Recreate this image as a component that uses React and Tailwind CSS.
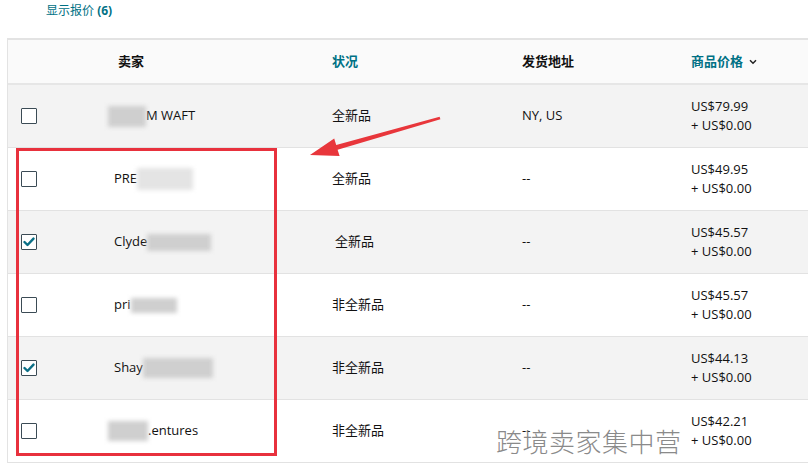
import React from 'react';

const rows = [
    { checked: false, gray: true, pre: '', blur: { w: 38, tone: 'dark', h: 21 }, post: 'M WAFT', cond: '全新品', ship: 'NY, US', price: 'US$79.99' },
    { checked: false, gray: false, pre: 'PRE', blur: { w: 56, tone: 'light', h: 22 }, post: '', cond: '全新品', ship: '--', price: 'US$49.95' },
    { checked: true, gray: true, pre: 'Clyde', blur: { w: 64, tone: 'dark', h: 17 }, post: '', cond: '全新品', ship: '--', price: 'US$45.57', condShift: true },
    { checked: false, gray: false, pre: 'pri', blur: { w: 46, tone: 'dark', h: 15 }, post: '', cond: '非全新品', ship: '--', price: 'US$45.57' },
    { checked: true, gray: true, pre: 'Shay', blur: { w: 70, tone: 'dark', h: 20 }, post: '', cond: '非全新品', ship: '--', price: 'US$44.13' },
    { checked: false, gray: false, pre: '', blur: { w: 40, tone: 'dark', h: 20 }, post: '.entures', cond: '非全新品', ship: '--', price: 'US$42.21' },
];

const Checkbox = ({ checked }) => (
    <div className="w-[16px] h-[16px] border border-[#3b4b55] bg-white rounded-[1px] flex items-center justify-center">
        {checked && (
            <svg width="12" height="10" viewBox="0 0 12 10">
                <path d="M1.5 5 L4.5 8 L10.5 1.6" fill="none" stroke="#0a6f86" strokeWidth="2.4" strokeLinecap="round" strokeLinejoin="round" />
            </svg>
        )}
    </div>
);

const Blur = ({ w, h, tone }) => (
    <span
        className={`inline-block align-middle blur-[2px] ${tone === 'dark' ? 'bg-[#cfcfcf]' : 'bg-[#e4e4e4]'}`}
        style={{ width: w, height: h }}
    ></span>
);

const App = () => {
    return (
        <div className="relative w-[812px] h-[467px] bg-white overflow-hidden text-[#111] text-[13px]" style={{ fontFamily: '"Open Sans", "Noto Sans CJK SC", sans-serif' }}>
            <div className="pl-[46px] pt-[3px] text-[12px] leading-[16px] text-[#007185]">
                显示报价 <span className="font-bold">(6)</span>
            </div>

            <div className="mt-[19px] ml-[7px] mr-[4px] border-t-2 border-l border-[#e3e3e3]">
                <div className="grid grid-cols-[100px_218px_190px_169px_1fr] h-[45px] items-center bg-[#fafafa] border-b-2 border-[#e6e6e6] font-bold">
                    <div></div>
                    <div className="pl-[10px]">卖家</div>
                    <div className="pl-[6px] text-[#007185]">状况</div>
                    <div className="pl-[6px]">发货地址</div>
                    <div className="pl-[6px] flex items-center gap-[6px] text-[#007185]">
                        商品价格
                        <svg width="8" height="6" viewBox="0 0 8 6">
                            <path d="M1 1.3 L4 4.3 L7 1.3" fill="none" stroke="#222" strokeWidth="1.5" />
                        </svg>
                    </div>
                </div>

                {rows.map((r, i) => (
                    <div
                        key={i}
                        className={`grid grid-cols-[100px_218px_190px_169px_1fr] h-[63px] items-center border-b border-[#e2e2e2] ${r.gray ? 'bg-[#f3f3f3]' : 'bg-white'}`}
                    >
                        <div className="pl-[13px]">
                            <Checkbox checked={r.checked} />
                        </div>
                        <div className={`${r.pre ? 'pl-[6px]' : 'pl-0'} flex items-center`}>
                            {r.pre}
                            <Blur {...r.blur} />
                            {r.post}
                        </div>
                        <div className={r.condShift ? 'pl-[9px]' : 'pl-[6px]'}>{r.cond}</div>
                        <div className="pl-[6px]">{r.ship}</div>
                        <div className="pl-[6px] leading-[19px]">
                            <div>{r.price}</div>
                            <div>+ US$0.00</div>
                        </div>
                    </div>
                ))}
            </div>

            <div className="absolute left-[16px] top-[148px] w-[261px] h-[308px] border-[3px] border-[#e8313d] pointer-events-none"></div>

            <svg className="absolute inset-0 pointer-events-none" width="812" height="467">
                <polygon
                    points="439.6,116.8 336.2,144.9 334.2,138.6 310,155 339.6,156.0 337.6,149.7 440.4,119.2"
                    fill="#e8363b"
                />
            </svg>

            <div
                className="absolute left-[496px] top-[424px] text-[26px] leading-[34px] font-light text-[#8a8a8a] tracking-[0.5px]"
                style={{ fontFamily: '"Noto Sans CJK SC", sans-serif' }}
            >
                跨境卖家集中营
            </div>
        </div>
    );
};

export default App;
